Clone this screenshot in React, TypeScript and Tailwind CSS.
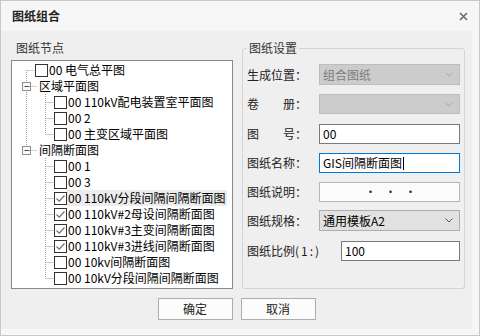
import type { ReactNode } from "react";

type L0 = "first" | "line" | "exp" | "expLast" | "none";
type L1 = "mid" | "last" | undefined;

const ROWS: { l0: L0; l1?: L1; text: string; cb?: boolean; checked?: boolean; sel?: boolean }[] = [
  { l0: "first", text: "00 电气总平图", cb: true },
  { l0: "exp", text: "区域平面图" },
  { l0: "line", l1: "mid", text: "00 110kV配电装置室平面图", cb: true },
  { l0: "line", l1: "mid", text: "00 2", cb: true },
  { l0: "line", l1: "last", text: "00 主变区域平面图", cb: true },
  { l0: "expLast", text: "间隔断面图" },
  { l0: "none", l1: "mid", text: "00 1", cb: true },
  { l0: "none", l1: "mid", text: "00 3", cb: true },
  { l0: "none", l1: "mid", text: "00 110kV分段间隔间隔断面图", cb: true, checked: true, sel: true },
  { l0: "none", l1: "mid", text: "00 110kV#2母设间隔断面图", cb: true, checked: true },
  { l0: "none", l1: "mid", text: "00 110kV#3主变间隔断面图", cb: true, checked: true },
  { l0: "none", l1: "mid", text: "00 110kV#3进线间隔断面图", cb: true, checked: true },
  { l0: "none", l1: "mid", text: "00 10kv间隔断面图", cb: true },
  { l0: "none", l1: "last", text: "00 10kV分段间隔间隔断面图", cb: true },
];

// dotted tree connector cell
const Conn = ({
  w,
  cx,
  up,
  down,
  horiz,
  box,
}: {
  w: number;
  cx: number;
  up?: boolean;
  down?: boolean;
  horiz?: boolean;
  box?: boolean;
}) => {
  const x = cx + 0.5;
  const dot = { stroke: "#a0a0a0", strokeDasharray: "1 1", strokeWidth: 1 };
  return (
    <svg width={w} height={16} className="block shrink-0">
      {up && <line x1={x} y1={0} x2={x} y2={8} {...dot} />}
      {down && <line x1={x} y1={8} x2={x} y2={16} {...dot} />}
      {horiz && <line x1={box ? x + 5 : x} y1={8.5} x2={w} y2={8.5} {...dot} />}
      {box && (
        <>
          <rect x={x - 4} y={4.5} width={8} height={8} fill="#fafafa" stroke="#8f8f8f" />
          <line x1={x - 2} y1={8.5} x2={x + 3} y2={8.5} stroke="#2b4c8c" />
        </>
      )}
    </svg>
  );
};

const CheckBox = ({ checked }: { checked?: boolean }) => (
  <span className="w-[13px] h-[13px] shrink-0 border border-[#333333] bg-white flex items-center justify-center">
    {checked && (
      <svg width={11} height={11}>
        <path d="M1.5 5.5 L4.2 8.2 L9.5 2.5" fill="none" stroke="#707070" strokeWidth={1.2} />
      </svg>
    )}
  </span>
);

const Chevron = ({ color }: { color: string }) => (
  <svg width={8} height={5} className="block">
    <polyline points="0.5,0.5 4,4 7.5,0.5" fill="none" stroke={color} strokeWidth={1} />
  </svg>
);

const Label = ({ a, b }: { a: string; b?: string }) => (
  <div className="w-[72px] shrink-0 flex items-center text-[#222]">
    {b ? (
      <span className="w-[48px] flex justify-between">
        <span>{a}</span>
        <span>{b}</span>
      </span>
    ) : (
      <span>{a}</span>
    )}
    <span>：</span>
  </div>
);

const Row = ({ className, children }: { className: string; children: ReactNode }) => (
  <div className={`flex items-center ${className}`}>{children}</div>
);

const Button = ({ children }: { children: ReactNode }) => (
  <div className="w-[75px] h-[22px] border border-[#adadad] bg-[#fcfcfc] flex items-center justify-center text-[#222]">
    {children}
  </div>
);

export default function App() {
  return (
    <div className="w-[480px] h-[336px] overflow-hidden border border-[#c8c8c8] bg-[#f6f6f6] font-['Noto_Sans_CJK_SC',sans-serif] text-[12px] leading-[16px] text-black">
      {/* Title bar */}
      <div className="h-[30px] flex items-center justify-between pl-[11px] pr-[11px]">
        <span className="font-bold text-[#222]">图纸组合</span>
        <svg width={9} height={9} className="block">
          <path d="M1 1 L8 8 M8 1 L1 8" stroke="#6b6b6b" strokeWidth={1.6} />
        </svg>
      </div>

      {/* Body */}
      <div className="w-[471px] h-[298px] bg-[#efefef] flex flex-col pt-[9px]">
        <div className="flex gap-[9px] pl-[10px]">
          {/* Tree */}
          <div className="w-[222px] flex flex-col">
            <div className="h-[16px] pl-[5px] text-[#333]">图纸节点</div>
            <div className="mt-[4px] h-[229px] border border-[#8a8a8a] bg-white pt-[1px] pl-[5px]">
              {ROWS.map((r) => (
                <div key={r.text} className="h-[16px] flex items-center">
                  {r.l0 === "first" && <Conn w={18} cx={9} down horiz />}
                  {r.l0 === "line" && <Conn w={18} cx={9} up down />}
                  {r.l0 === "exp" && <Conn w={20} cx={9} up down horiz box />}
                  {r.l0 === "expLast" && <Conn w={20} cx={9} up horiz box />}
                  {r.l0 === "none" && <div className="w-[18px] shrink-0" />}
                  {r.l1 && <Conn w={19} cx={10} up down={r.l1 === "mid"} horiz />}
                  {r.cb && <CheckBox checked={r.checked} />}
                  <span
                    className={`whitespace-nowrap px-[1px] ${r.cb ? "" : "ml-[1px]"} ${
                      r.sel ? "bg-[#ececec]" : ""
                    }`}
                  >
                    {r.text}
                  </span>
                </div>
              ))}
            </div>
          </div>

          {/* Settings */}
          <fieldset className="w-[223px] h-[249px] border border-[#d4d4d4] rounded-[3px] pl-[4px] pr-[4px]">
            <legend className="px-[2px] text-[#333]">图纸设置</legend>

            <Row className="mt-[8px]">
              <Label a="生成位置" />
              <div className="w-[141px] h-[21px] border border-[#bdbdbd] bg-[#cccccc] flex items-center justify-between pl-[3px] pr-[6px] text-[#7c7c7c]">
                <span>组合图纸</span>
                <Chevron color="#a8a8a8" />
              </div>
            </Row>

            <Row className="mt-[9px]">
              <Label a="卷" b="册" />
              <div className="w-[141px] h-[20px] border border-[#bdbdbd] bg-[#cccccc] flex items-center justify-end pr-[6px]">
                <Chevron color="#a8a8a8" />
              </div>
            </Row>

            <Row className="mt-[10px]">
              <Label a="图" b="号" />
              <div className="w-[141px] h-[20px] border border-[#7a7a7a] bg-white flex items-center pl-[3px]">
                00
              </div>
            </Row>

            <Row className="mt-[9px]">
              <Label a="图纸名称" />
              <div className="w-[141px] h-[20px] border border-[#0078d7] bg-white flex items-center pl-[3px]">
                <span>GIS间隔断面图</span>
                <span className="w-[1px] h-[13px] bg-black ml-[1px]" />
              </div>
            </Row>

            <Row className="mt-[9px]">
              <Label a="图纸说明" />
              <div className="w-[141px] h-[20px] border border-[#b5b5b5] bg-[#fbfbfb] flex items-center justify-center gap-[8px] pl-[2px] text-[#333]">
                <span>·</span>
                <span>·</span>
                <span>·</span>
              </div>
            </Row>

            <Row className="mt-[8px]">
              <Label a="图纸规格" />
              <div className="w-[141px] h-[21px] border border-[#adadad] bg-[#e1e1e1] flex items-center justify-between pl-[3px] pr-[6px]">
                <span>通用模板A2</span>
                <Chevron color="#555555" />
              </div>
            </Row>

            <Row className="mt-[10px]">
              <div className="w-[94px] shrink-0 text-[#222]">
                图纸比例<span className="tracking-[2px]">(1:)</span>
              </div>
              <div className="w-[119px] h-[20px] border border-[#7a7a7a] bg-white flex items-center pl-[3px]">
                100
              </div>
            </Row>
          </fieldset>
        </div>

        {/* Buttons */}
        <div className="mt-[9px] flex justify-center gap-[8px]">
          <Button>确定</Button>
          <Button>取消</Button>
        </div>
      </div>
    </div>
  );
}
